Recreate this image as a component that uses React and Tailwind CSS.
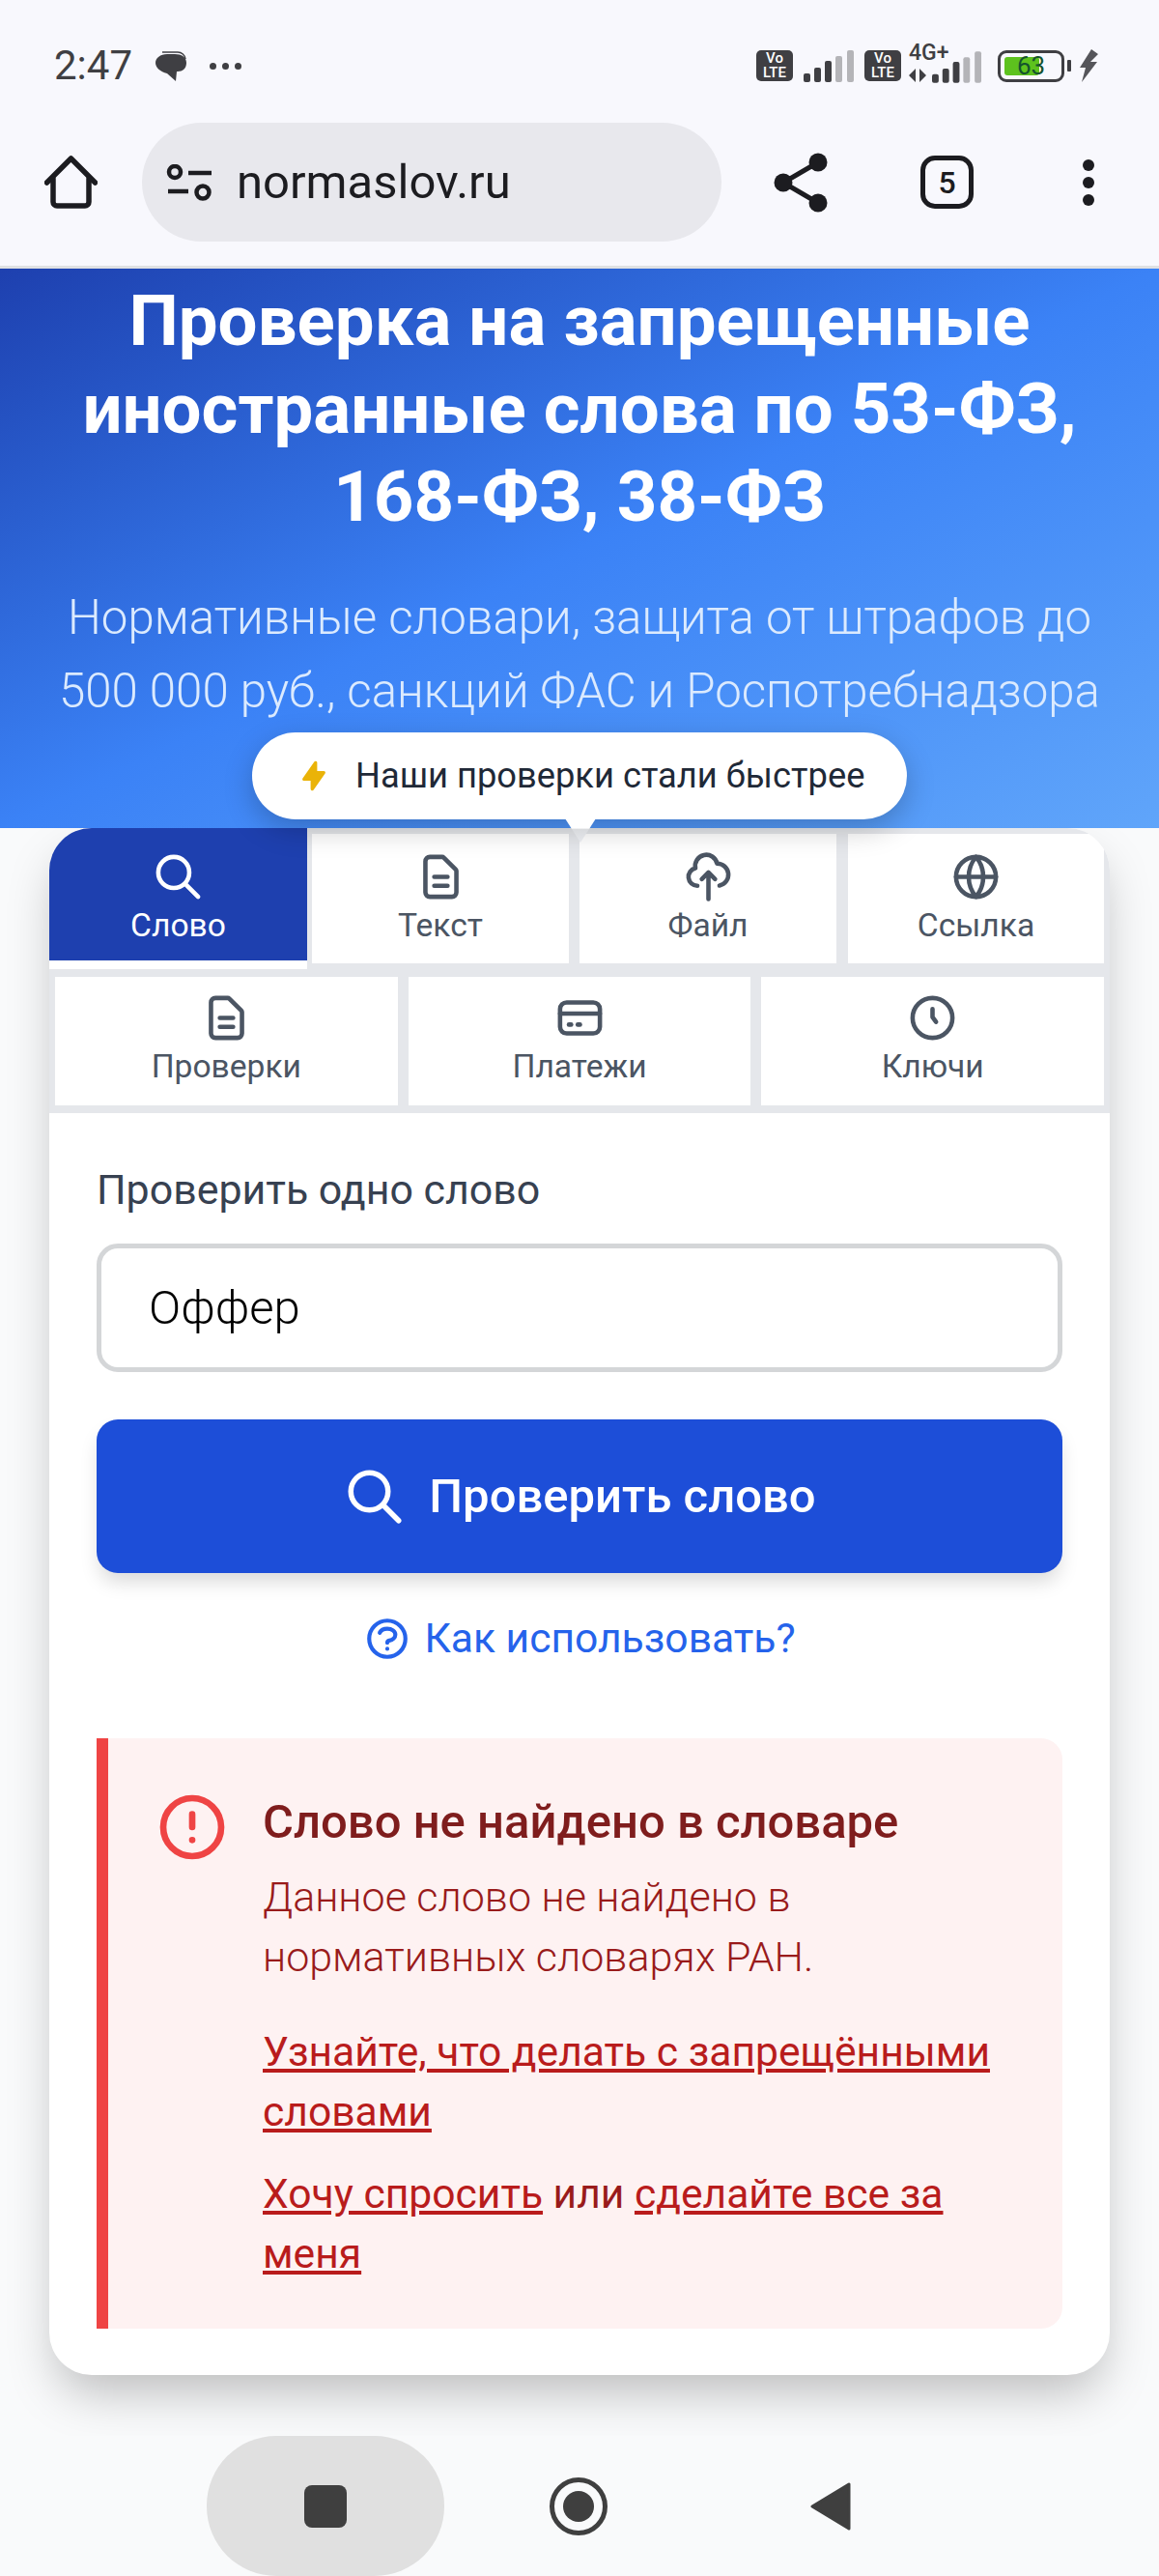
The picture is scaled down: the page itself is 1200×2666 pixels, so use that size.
import React from "react";

const Hi = ({ d, size = 55, sw = 2, className = "" }) => (
  <svg width={size} height={size} viewBox="0 0 24 24" fill="none" stroke="currentColor" strokeWidth={sw} strokeLinecap="round" strokeLinejoin="round" className={className}>
    {d.map((p, i) => (<path key={i} d={p} />))}
  </svg>
);

const SEARCH = ["M21 21l-6-6m2-5a7 7 0 11-14 0 7 7 0 0114 0z"];
const DOC = ["M9 12h6m-6 4h6m2 5H7a2 2 0 01-2-2V5a2 2 0 012-2h5.586a1 1 0 01.707.293l5.414 5.414a1 1 0 01.293.707V19a2 2 0 01-2 2z"];
const CLOUD = ["M7 16a4 4 0 01-.88-7.903A5 5 0 1115.9 6L16 6a5 5 0 011 9.9M15 13l-3-3m0 0l-3 3m3-3v12"];
const GLOBE = ["M3 12a9 9 0 1 0 18 0a9 9 0 1 0-18 0", "M12 3a14 14 0 0 0 0 18a14 14 0 0 0 0-18", "M3 12h18"];
const CARD = ["M6 5h12a3 3 0 0 1 3 3v8a3 3 0 0 1-3 3H6a3 3 0 0 1-3-3V8a3 3 0 0 1 3-3z", "M3 10h18", "M7 15h1", "M11 15h1"];
const CLOCK = ["M12 8v3.6l1.6 2.2M21 12a9 9 0 11-18 0 9 9 0 0118 0z"];
const HELP = ["M8.228 9c.549-1.165 2.03-2 3.772-2 2.21 0 4 1.343 4 3 0 1.4-1.278 2.575-3.006 2.907-.542.104-.994.54-.994 1.093m0 3h.01M21 12a9 9 0 11-18 0 9 9 0 0118 0z"];
const ALERT = ["M12 8v4m0 4h.01M21 12a9 9 0 11-18 0 9 9 0 0118 0z"];

const Bars = ({ w = 53, h = 33, on = 3 }) => (
  <svg width={w} height={h} viewBox="0 0 53 33">
    {[[0, 24, 7], [11, 18, 7], [22, 11, 7], [33, 6, 7], [45, 0, 7]].map(([x, y, bw], i) => (
      <rect key={x} x={x} y={y} width={bw} height={33 - y} rx="2" fill={i < on ? "#3f3f43" : "#b4b4b8"} />
    ))}
  </svg>
);

const VoLte = () => (
  <div className="flex h-[32px] w-[38px] flex-col items-center justify-center rounded-[5px] bg-[#3f3f43] text-[15px] leading-[15px] font-medium text-white">
    <span>Vo</span>
    <span>LTE</span>
  </div>
);

const Tab = ({ icon, label, className = "", active = false, pad = "pt-[15px]" }) => (
  <div className={"flex flex-col items-center " + pad + " " + (active ? "bg-[#1e40af] text-white " : "bg-white text-[#4b5563] ") + className}>
    <Hi d={icon} />
    <span className="mt-[3px] text-[33.6px] leading-[40px] font-normal">{label}</span>
  </div>
);

export default function App() {
  return (
    <div className="flex h-[2666px] w-[1200px] flex-col overflow-hidden bg-[#f9fafb] font-['Roboto',sans-serif]">
      {/* status bar */}
      <div className="flex h-[110px] items-center bg-[#f8f8fd] pt-[26px] pl-[56px] text-[#3f3f43]">
        <span className="w-[80px] text-[42px] leading-[44px]">2:47</span>
        <svg width="34" height="32" viewBox="0 0 34 32" className="ml-[24px]">
          <path d="M8 2h16a8 8 0 0 1 8 7" fill="none" stroke="#3f3f43" strokeWidth="1.5" />
          <path d="M13 4h8c7 0 12 3 12 9s-4 9-9 9h-1l-1 10-9-8C6 22 1 18 1 13 1 8 6 4 13 4z" fill="#3f3f43" />
        </svg>
        <div className="ml-[23px] flex gap-[6px]">
          <i className="block h-[7px] w-[7px] rounded-full bg-[#3f3f43]" />
          <i className="block h-[7px] w-[7px] rounded-full bg-[#3f3f43]" />
          <i className="block h-[7px] w-[7px] rounded-full bg-[#3f3f43]" />
        </div>
        <div className="ml-[533px] flex items-center">
          <VoLte />
          <div className="ml-[11px]"><Bars /></div>
          <div className="ml-[10px]"><VoLte /></div>
          <div className="relative ml-[8px] h-[36px] w-[76px]">
            <span className="absolute top-[-7px] left-0 text-[23px] leading-[24px] font-medium">4G+</span>
            <svg width="18" height="14" viewBox="0 0 18 14" className="absolute bottom-[1px] left-0">
              <path d="M7 0v14L0 7zM11 14V0l7 7z" fill="#3f3f43" />
            </svg>
            <div className="absolute right-0 bottom-0"><Bars w={52} h={33} /></div>
          </div>
          <div className="relative ml-[16px] flex h-[33px] w-[69px] items-center rounded-[9px] border-[3px] border-[#3f3f43] p-[4px]">
            <div className="h-full w-[36px] rounded-[3px] bg-[#5dc21e]" />
            <span className="absolute inset-0 text-center text-[26px] leading-[27px] text-[#14532d]">63</span>
          </div>
          <div className="ml-[3px] h-[12px] w-[4px] rounded-[1px] bg-[#3f3f43]" />
          <svg width="20" height="34" viewBox="0 0 20 34" className="ml-[8px]">
            <path d="M13 0L1 19h6L3 34 19 13h-7l8-8z" fill="#55555a" />
          </svg>
        </div>
      </div>

      {/* browser toolbar */}
      <div className="flex h-[168px] items-center border-b-[3px] border-[#dfe1e3] bg-[#f8f8fd] pb-[8px] pl-[46px] text-[#1c1c20]">
        <svg width="55" height="55" viewBox="0 0 55 55" fill="none" stroke="currentColor" strokeWidth="5.5" strokeLinecap="round" strokeLinejoin="round">
          <path d="M2.5 28L27.5 3l25 25" />
          <path d="M9 24v24a4 4 0 0 0 4 4h29a4 4 0 0 0 4-4V24" />
        </svg>
        <div className="ml-[46px] flex h-[123px] w-[600px] items-center rounded-full bg-[#e8e8ed] pl-[25px]">
          <svg width="48" height="38" viewBox="0 0 48 38" fill="none" stroke="currentColor" strokeWidth="4.5">
            <circle cx="9" cy="8" r="6" />
            <path d="M23 9h24M2 28h21" />
            <circle cx="38" cy="29" r="6.5" />
          </svg>
          <span className="ml-[25px] text-[49px] leading-[56px] font-normal">normaslov.ru</span>
        </div>
        <svg width="56" height="62" viewBox="0 0 56 62" className="ml-[54px]">
          <path d="M46 10L10 31l36 21" fill="none" stroke="currentColor" strokeWidth="5" />
          <circle cx="46" cy="10" r="9.5" fill="currentColor" />
          <circle cx="10" cy="31" r="9.5" fill="currentColor" />
          <circle cx="46" cy="52" r="9.5" fill="currentColor" />
        </svg>
        <div className="ml-[96px] flex h-[55px] w-[55px] items-center justify-center rounded-[15px] border-[5px] border-current text-[32px] leading-none font-medium">5</div>
        <div className="ml-[113px] flex flex-col gap-[6px]">
          <i className="block h-[12px] w-[12px] rounded-full bg-current" />
          <i className="block h-[12px] w-[12px] rounded-full bg-current" />
          <i className="block h-[12px] w-[12px] rounded-full bg-current" />
        </div>
      </div>

      {/* hero */}
      <div className="relative h-[579px] shrink-0 bg-linear-to-br from-[#1e40af] via-[#3b82f6] to-[#60a5fa] pt-[9px] text-center text-white">
        <h1 className="text-[72.6px] leading-[91px] font-bold">
          Проверка на запрещенные<br />иностранные слова по 53-ФЗ,<br />168-ФЗ, 38-ФЗ
        </h1>
        <p className="mt-[41px] text-[49.2px] leading-[76px] font-light text-[#dbeafe]">
          Нормативные словари, защита от штрафов до<br />500 000 руб., санкций ФАС и Роспотребнадзора
        </p>
        <div className="absolute top-[480px] left-[261px] z-20 flex h-[90px] w-[678px] items-center rounded-full bg-white pl-[47px] text-[#1f2937] shadow-[0_10px_30px_rgba(0,0,0,0.22)]">
          <svg width="34" height="36" viewBox="0 0 20 20" fill="#eab308">
            <path d="M11.3 1.046A1 1 0 0112 2v5h4a1 1 0 01.82 1.573l-7 10A1 1 0 018 18v-5H4a1 1 0 01-.82-1.573l7-10a1 1 0 011.12-.38z" />
          </svg>
          <span className="ml-[26px] text-[36.3px] leading-[44px]">Наши проверки стали быстрее</span>
        </div>
        <svg width="32" height="25" viewBox="0 0 32 25" className="absolute top-[569px] left-[585px] z-20">
          <defs>
            <linearGradient id="tail" x1="0" y1="0" x2="0" y2="1">
              <stop offset="0" stopColor="#ffffff" />
              <stop offset="0.4" stopColor="#ffffff" />
              <stop offset="0.45" stopColor="#d8dadd" />
              <stop offset="1" stopColor="#e5e7eb" />
            </linearGradient>
          </defs>
          <path d="M0 0h32L16 25z" fill="url(#tail)" />
        </svg>
      </div>

      {/* main */}
      <div className="h-[1664px] shrink-0 pb-[63px]">
        <div className="mx-[51px] h-full overflow-hidden rounded-[44px] bg-white shadow-[0_25px_50px_-8px_rgba(0,0,0,0.25)]">
          <div className="flex h-[295px] flex-col bg-[#e5e7eb]">
            <div className="flex h-[140px] pr-[6px]">
              <div className="z-0 h-[146px] w-[267px] rounded-tl-[44px] border-b-[9px] border-white bg-[#1e40af]">
                <Tab icon={SEARCH} label="Слово" active className="h-full" pad="pt-[23px]" />
              </div>
              <Tab icon={DOC} label="Текст" className="mt-[6px] ml-[5px] w-[266px]" pad="pt-[17px]" />
              <Tab icon={CLOUD} label="Файл" className="mt-[6px] ml-[11px] w-[266px]" pad="pt-[17px]" />
              <Tab icon={GLOBE} label="Ссылка" className="mt-[6px] ml-[12px] w-[265px]" pad="pt-[17px]" />
            </div>
            <div className="mt-[14px] flex gap-[11px] px-[6px]">
              <Tab icon={DOC} label="Проверки" className="h-[133px] flex-1" />
              <Tab icon={CARD} label="Платежи" className="h-[133px] flex-1" />
              <Tab icon={CLOCK} label="Ключи" className="h-[133px] flex-1" />
            </div>
          </div>

          <div className="px-[49px] pt-[54px]">
            <div className="text-[42.9px] leading-[50px] font-normal text-[#374151]">Проверить одно слово</div>
            <div className="mt-[31px] flex h-[133px] items-center rounded-[22px] border-[5px] border-[#d4d6d8] pl-[49px] text-[49px] font-light text-black">Оффер</div>
            <div className="mt-[49px] flex h-[159px] items-center justify-center rounded-[22px] bg-[#1d4ed8] text-white shadow-[0_12px_20px_-3px_rgba(0,0,0,0.15)]">
              <Hi d={SEARCH} size={66} />
              <span className="ml-[23px] text-[49px] font-medium">Проверить слово</span>
            </div>
            <div className="mt-[43px] flex h-[50px] items-center justify-center text-[#2563eb]">
              <Hi d={HELP} size={50} />
              <span className="ml-[13px] text-[42.6px]">Как использовать?</span>
            </div>
            <div className="mt-[78px] flex h-[611px] rounded-r-[22px] border-l-[12px] border-[#ef4444] bg-[#fef2f2] pt-[52px] pl-[47px]">
              <div className="text-[#ef4444]"><Hi d={ALERT} size={80} /></div>
              <div className="ml-[33px] flex-1 pt-[4px] pr-[60px]">
                <div className="text-[49px] leading-[62px] font-medium text-[#7f1d1d]">Слово не найдено в словаре</div>
                <p className="mt-[15px] text-[43px] leading-[62px] font-light text-[#991b1b]">Данное слово не найдено в нормативных словарях РАН.</p>
                <p className="mt-[36px] text-[42.6px] leading-[62px] text-[#b91c1c] underline">Узнайте, что делать с запрещёнными словами</p>
                <p className="mt-[23px] text-[42.6px] leading-[62px] text-[#991b1b]">
                  <span className="text-[#b91c1c] underline">Хочу спросить</span> или <span className="text-[#b91c1c] underline">сделайте все за меня</span>
                </p>
              </div>
            </div>
          </div>
        </div>
      </div>

      {/* navigation */}
      <div className="relative z-10 flex h-[145px] shrink-0 items-center bg-[#f9fafb] pl-[214px]">
        <div className="flex h-[145px] w-[246px] items-center justify-center rounded-[72px] bg-[#e0e0e0]">
          <div className="h-[44px] w-[44px] rounded-[8px] bg-[#3f3f3f]" />
        </div>
        <div className="ml-[109px] flex h-[60px] w-[60px] items-center justify-center rounded-full border-[5px] border-[#3f3f3f]">
          <div className="h-[32px] w-[32px] rounded-full bg-[#3f3f3f]" />
        </div>
        <svg width="42" height="52" viewBox="0 0 42 52" className="ml-[210px]">
          <path d="M40 3v46L2 26z" fill="#3f3f3f" stroke="#3f3f3f" strokeWidth="3" strokeLinejoin="round" />
        </svg>
      </div>
    </div>
  );
}
